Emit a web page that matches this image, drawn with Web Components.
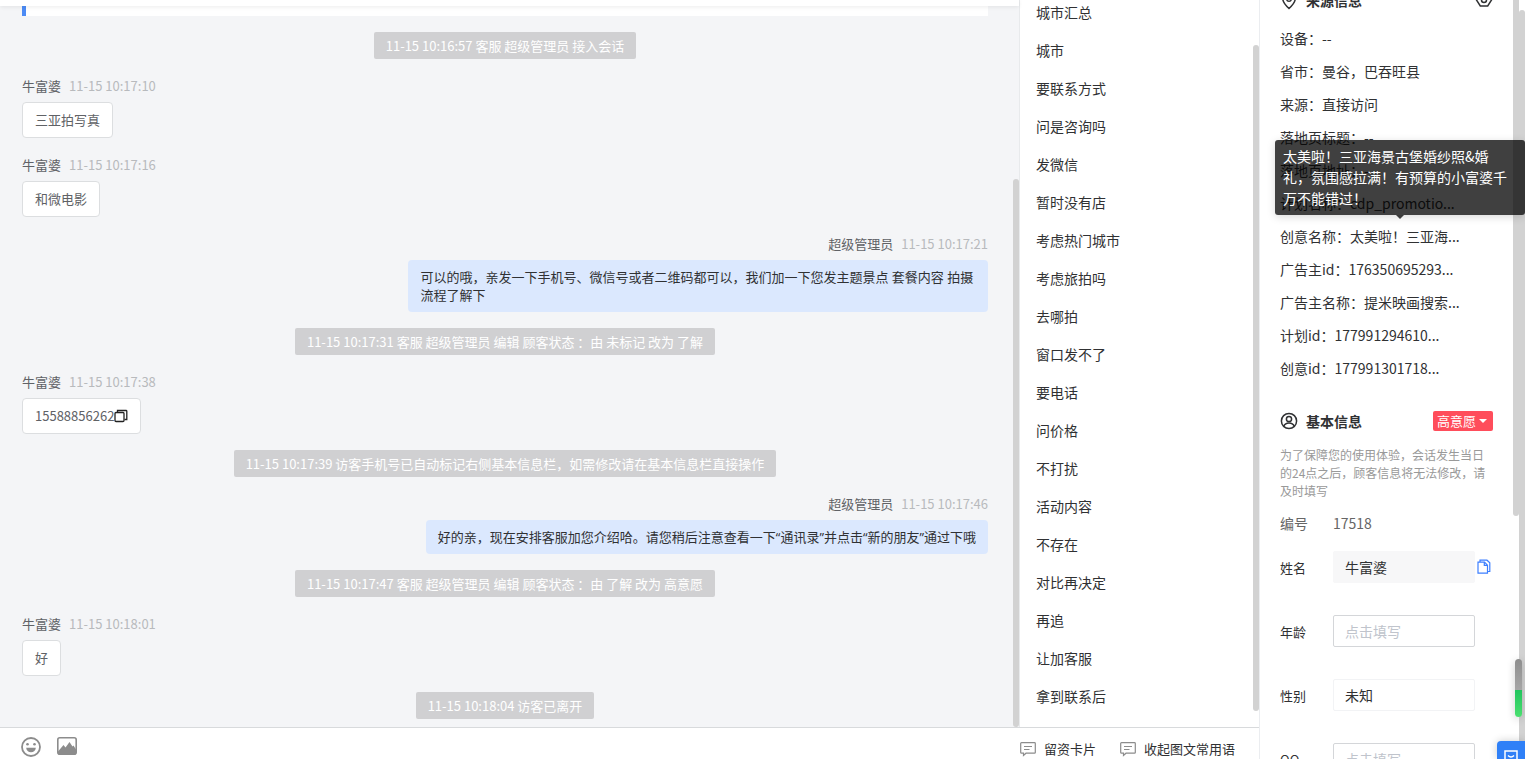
<!DOCTYPE html>
<html lang="zh-CN">
<head>
<meta charset="utf-8">
<title>客服工作台</title>
<style>
  html, body {
    height: 100%;
    margin: 0;
    overflow: hidden;
  }

  body {
    font-family: "Noto Sans CJK SC", "Liberation Sans", sans-serif;
    font-size: 14px;
    color: #303133;
    background: #ffffff;
  }
</style>
</head>
<body>
<chat-app>
  <chat-window slot="chat">
    <chat-notice>11-15 10:16:57 客服 超级管理员 接入会话</chat-notice>
    <chat-message name="牛富婆" time="11-15 10:17:10">三亚拍写真</chat-message>
    <chat-message name="牛富婆" time="11-15 10:17:16">和微电影</chat-message>
    <chat-message out name="超级管理员" time="11-15 10:17:21">可以的哦，亲发一下手机号、微信号或者二维码都可以，我们加一下您发主题景点 套餐内容 拍摄流程了解下</chat-message>
    <chat-notice>11-15 10:17:31 客服 超级管理员 编辑 顾客状态 ：由 未标记 改为 了解</chat-notice>
    <chat-message copy name="牛富婆" time="11-15 10:17:38">15588856262</chat-message>
    <chat-notice>11-15 10:17:39 访客手机号已自动标记右侧基本信息栏，如需修改请在基本信息栏直接操作</chat-notice>
    <chat-message out name="超级管理员" time="11-15 10:17:46">好的亲，现在安排客服加您介绍哈。请您稍后注意查看一下“通讯录”并点击“新的朋友”通过下哦</chat-message>
    <chat-notice>11-15 10:17:47 客服 超级管理员 编辑 顾客状态 ：由 了解 改为 高意愿</chat-notice>
    <chat-message name="牛富婆" time="11-15 10:18:01">好</chat-message>
    <chat-notice>11-15 10:18:04 访客已离开</chat-notice>
  </chat-window>
  <phrase-list slot="phrases" items="城市汇总,城市,要联系方式,问是咨询吗,发微信,暂时没有店,考虑热门城市,考虑旅拍吗,去哪拍,窗口发不了,要电话,问价格,不打扰,活动内容,不存在,对比再决定,再追,让加客服,拿到联系后"></phrase-list>
  <chat-toolbar slot="toolbar"></chat-toolbar>
  <visitor-panel slot="panel">
    <info-row label="设备">--</info-row>
    <info-row label="省市">曼谷，巴吞旺县</info-row>
    <info-row label="来源">直接访问</info-row>
    <info-row label="落地页标题">--</info-row>
    <info-row label="落地页地址">--</info-row>
    <info-row label="计划名称">cdp_promotio...</info-row>
    <info-row label="创意名称" tip="太美啦！三亚海景古堡婚纱照&amp;婚礼，氛围感拉满！有预算的小富婆千万不能错过！">太美啦！三亚海...</info-row>
    <info-row label="广告主id">176350695293...</info-row>
    <info-row label="广告主名称">提米映画搜索...</info-row>
    <info-row label="计划id">177991294610...</info-row>
    <info-row label="创意id">177991301718...</info-row>
  </visitor-panel>
</chat-app>
<help-dock></help-dock>

<script>
function define(name, html, setup) {
  const template = document.createElement('template');
  template.innerHTML = html;

  window.customElements.define(name, class extends HTMLElement {
    constructor() {
      super();
      this.attachShadow({ mode: 'open' });
      this.shadowRoot.appendChild(template.content.cloneNode(true));
    }

    connectedCallback() {
      if (setup) setup(this, this.shadowRoot);
    }
  });
}

// before / size / after are the shares of the track
define('scroll-bar', `
  <style>
    :host {
      display: flex;
      flex: none;
      flex-direction: column;
      width: 6px;
    }
    .thumb {
      border-radius: 3px;
      background: #d2d2d2;
    }
    :host([before="0"]) .thumb {
      border-radius: 0 0 3px 3px;
    }
  </style>
  <div class="before"></div>
  <div class="thumb"></div>
  <div class="after"></div>
`, (el, root) => {
  root.querySelector('.before').style.flex = el.getAttribute('before') + ' 0 0';
  root.querySelector('.thumb').style.flex = el.getAttribute('size') + ' 0 0';
  root.querySelector('.after').style.flex = el.getAttribute('after') + ' 0 0';
});

define('chat-app', `
  <style>
    :host {
      display: flex;
      height: 100vh;
      overflow: hidden;
    }
    .main {
      flex: 1;
      min-width: 0;
      display: flex;
      flex-direction: column;
    }
    .columns {
      flex: 1;
      min-height: 0;
      display: flex;
    }
  </style>
  <div class="main">
    <div class="columns">
      <slot name="chat"></slot>
      <slot name="phrases"></slot>
    </div>
    <slot name="toolbar"></slot>
  </div>
  <slot name="panel"></slot>
`);

define('chat-window', `
  <style>
    :host {
      flex: 1;
      min-width: 0;
      display: flex;
      flex-direction: column;
      background: #f4f5f7;
    }
    .top {
      flex: none;
      height: 6px;
      background: #ffffff;
      box-shadow: 0 1px 4px rgba(0, 0, 0, 0.08);
      z-index: 1;
    }
    .body {
      flex: 1;
      min-height: 0;
      display: flex;
      margin-top: -6px;
    }
    .log {
      flex: 1;
      min-width: 0;
      display: flex;
      flex-direction: column;
      justify-content: flex-end;
      gap: 16px;
      padding: 0 25px 8px 22px;
      overflow: hidden;
    }
    .card {
      flex: 1;
      box-sizing: border-box;
      border-left: 4px solid #4c8bf5;
      background: #ffffff;
    }
  </style>
  <div class="top"></div>
  <div class="body">
    <div class="log">
      <div class="card"></div>
      <slot></slot>
    </div>
    <scroll-bar before="179" size="548" after="0"></scroll-bar>
  </div>
`);

define('chat-notice', `
  <style>
    :host {
      align-self: center;
      box-sizing: border-box;
      height: 27px;
      padding: 1px 12px 0;
      border-radius: 2px;
      background: #d0d0d2;
      color: #ffffff;
      font-size: 13px;
      line-height: 26px;
      white-space: nowrap;
    }
  </style>
  <slot></slot>
`);

define('chat-message', `
  <style>
    :host {
      display: flex;
      flex-direction: column;
      align-items: flex-start;
      gap: 5px;
      font-size: 13px;
    }
    :host([out]) {
      align-items: flex-end;
    }
    .meta {
      display: flex;
      gap: 8px;
      line-height: 22px;
    }
    .name {
      color: #606266;
    }
    .time {
      color: #b8babd;
    }
    .bubble {
      display: flex;
      align-items: center;
      box-sizing: border-box;
      max-width: 60%;
      padding: 8px 12px;
      border: 1px solid #dcdee0;
      border-radius: 4px;
      background: #ffffff;
      color: #606266;
      line-height: 18px;
    }
    :host([out]) .bubble {
      display: block;
      border: 0;
      background: #dbe8fe;
      color: #303133;
      font-family: "Open Sans", "Noto Sans CJK SC", sans-serif;
    }
    button {
      display: none;
      padding: 0;
      border: 0;
      background: none;
      color: #222222;
    }
    :host([copy]) button {
      display: block;
    }
    svg {
      display: block;
    }
  </style>
  <div class="meta"><span class="name"></span><span class="time"></span></div>
  <div class="bubble">
    <slot></slot>
    <button aria-label="复制">
      <svg width="14" height="14" viewBox="0 0 14 14" fill="none" stroke="currentColor" stroke-width="1.3">
        <rect x="1" y="3.5" width="9" height="9" rx="1"/>
        <path d="M3.5 3V1.5h8.5a.8.8 0 0 1 .8.8V10.500H10.500"/>
      </svg>
    </button>
  </div>
`, (el, root) => {
  root.querySelector('.name').textContent = el.getAttribute('name');
  root.querySelector('.time').textContent = el.getAttribute('time');
});

define('phrase-list', `
  <style>
    :host {
      flex: none;
      box-sizing: border-box;
      display: flex;
      width: 240px;
      border-left: 1px solid #e8eaec;
      background: #ffffff;
    }
    ul {
      flex: 1;
      display: flex;
      flex-direction: column;
      justify-content: flex-end;
      margin: 0;
      padding: 0 16px 12px;
      overflow: hidden;
      list-style: none;
    }
    li {
      flex: none;
      line-height: 38px;
    }
  </style>
  <ul></ul>
  <scroll-bar before="45" size="666" after="16"></scroll-bar>
`, (el, root) => {
  const list = root.querySelector('ul');
  el.getAttribute('items').split(',').forEach((text) => {
    const li = document.createElement('li');
    li.textContent = text;
    list.appendChild(li);
  });
});

define('chat-toolbar', `
  <style>
    :host {
      flex: none;
      display: flex;
      justify-content: space-between;
      box-sizing: border-box;
      height: 32px;
      padding: 0 24px 0 21px;
      border-top: 1px solid #d8dadc;
      background: #ffffff;
    }
    .group {
      display: flex;
      gap: 16px;
      padding-top: 9px;
    }
    .group.text {
      gap: 24px;
      padding-top: 11px;
    }
    button {
      display: flex;
      align-items: center;
      gap: 8px;
      height: 20px;
      padding: 0;
      border: 0;
      background: none;
      color: #303133;
      font: inherit;
      font-size: 13px;
      line-height: 20px;
      white-space: nowrap;
    }
    svg {
      flex: none;
      color: #8c8c8c;
    }
  </style>
  <div class="group">
    <button aria-label="表情">
      <svg width="20" height="20" viewBox="0 0 20 20">
        <circle cx="10" cy="10" r="9" fill="none" stroke="currentColor" stroke-width="1.800"/>
        <circle cx="6.500" cy="7.300" r="1.300" fill="currentColor"/>
        <circle cx="13.500" cy="7.300" r="1.300" fill="currentColor"/>
        <path d="M5.200 10.800h9.600a4.800 4.400 0 0 1-9.600 0z" fill="currentColor"/>
      </svg>
    </button>
    <button aria-label="图片">
      <svg width="20" height="20" viewBox="0 0 20 20">
        <rect x=".8" y=".8" width="18.400" height="16.400" rx="2" fill="none" stroke="currentColor" stroke-width="1.600"/>
        <path d="M1 14.500 6.500 8l2 2.500L12.500 5l3 4.500 1-1L19 12.500V17H1z" fill="currentColor"/>
      </svg>
    </button>
  </div>
  <div class="group text">
    <button>
      <svg width="16" height="16" viewBox="0 0 16 16" fill="none" stroke="currentColor" stroke-width="1.200">
        <path d="M1.500 1.600h13a.8.8 0 0 1 .8.8v9a.8.8 0 0 1-.8.8H6L3.500 14.400V12.200h-2a.8.8 0 0 1-.8-.8v-9a.8.8 0 0 1 .8-.8zM4 5.500h8M4 8.500h5.500"/>
      </svg>
      留资卡片
    </button>
    <button>
      <svg width="16" height="16" viewBox="0 0 16 16" fill="none" stroke="currentColor" stroke-width="1.200">
        <path d="M1.500 1.600h13a.8.8 0 0 1 .8.8v9a.8.8 0 0 1-.8.8H6L3.500 14.400V12.200h-2a.8.8 0 0 1-.8-.8v-9a.8.8 0 0 1 .8-.8zM4 5.500h8M4 8.500h5.500"/>
      </svg>
      收起图文常用语
    </button>
  </div>
`);

define('info-row', `
  <style>
    :host {
      display: block;
      position: relative;
      line-height: 33px;
      white-space: nowrap;
    }
    .tip {
      display: none;
      position: absolute;
      z-index: 2;
      left: -5px;
      bottom: calc(100% + 5px);
      box-sizing: border-box;
      width: 250px;
      padding: 6px 16px 6px 8px;
      border-radius: 3px;
      background: rgba(0, 0, 0, 0.75);
      box-shadow: 0 2px 8px rgba(0, 0, 0, 0.15);
      color: #ffffff;
      line-height: 21px;
      white-space: normal;
    }
    .tip::after {
      content: "";
      position: absolute;
      top: 100%;
      left: 50%;
      margin-left: -4px;
      border: 4px solid transparent;
      border-bottom: 0;
      border-top-color: rgba(0, 0, 0, 0.75);
    }
    :host([tip]) .tip {
      display: block;
    }
  </style>
  <span class="label"></span><slot></slot>
  <div class="tip" role="tooltip"></div>
`, (el, root) => {
  root.querySelector('.label').textContent = el.getAttribute('label') + '：';
  root.querySelector('.tip').textContent = el.getAttribute('tip') || '';
});

define('form-row', `
  <style>
    :host {
      display: flex;
      align-items: center;
      height: 32px;
      margin-bottom: 32px;
    }
    label {
      flex: none;
      width: 53px;
      font-size: 13px;
    }
    input, select {
      flex: none;
      appearance: none;
      box-sizing: border-box;
      width: 142px;
      height: 32px;
      margin: 0;
      padding: 0 11px;
      border: 1px solid #d4d6d9;
      border-radius: 2px;
      background: #ffffff;
      color: #303133;
      font: inherit;
      outline: 0;
    }
    select {
      border-color: #f2f3f5;
    }
    input[readonly] {
      border-color: #f7f7f8;
      background: #f7f7f8;
    }
    input::placeholder {
      color: #c0c4cc;
      opacity: 1;
    }
    button {
      margin-left: 2px;
      padding: 0;
      border: 0;
      background: none;
    }
    svg {
      display: block;
    }
  </style>
  <label for="field"></label>
`, (el, root) => {
  root.querySelector('label').textContent = el.getAttribute('label');
  const value = el.getAttribute('value');
  const field = document.createElement(el.hasAttribute('select') ? 'select' : 'input');
  field.id = 'field';
  if (el.hasAttribute('select')) {
    field.add(new Option(value, value));
  } else if (value) {
    field.value = value;
    field.readOnly = true;
  } else {
    field.placeholder = '点击填写';
  }
  root.appendChild(field);
  if (el.hasAttribute('copy')) {
    const button = document.createElement('button');
    button.setAttribute('aria-label', '复制');
    button.innerHTML = `
      <svg width="14" height="16" viewBox="0 0 14 16" fill="none" stroke="#3d7fff" stroke-width="1.200">
        <path d="M1 3.200h6.500l3 3V14.200H1zM7.300 3.200v3.200h3.200M3 2.800V1.200h7l2.800 2.500v8.800h-2"/>
      </svg>`;
    root.appendChild(button);
  }
});

define('visitor-panel', `
  <style>
    :host {
      flex: none;
      box-sizing: border-box;
      display: flex;
      width: 266px;
      border-left: 1px solid #ebedf0;
      background: #ffffff;
    }
    .content {
      flex: 1;
      min-width: 0;
      margin-top: -11px;
      padding: 0 20px;
    }
    header {
      display: flex;
      align-items: center;
      gap: 8px;
      height: 22px;
    }
    h2 {
      flex: 1;
      margin: 0;
      font-size: 14px;
      line-height: 22px;
      font-weight: bold;
    }
    svg {
      flex: none;
      display: block;
    }
    .source {
      padding: 11px 0 25px;
    }
    .tag {
      display: flex;
      align-items: center;
      gap: 3px;
      height: 20px;
      padding: 0 6px 0 4px;
      border: 0;
      border-radius: 2px;
      background: #ff4d5b;
      color: #ffffff;
      font: inherit;
      font-size: 13px;
      line-height: 20px;
    }
    .caret {
      border: 4px solid transparent;
      border-top-color: #ffffff;
      border-bottom: 0;
    }
    p {
      margin: 0;
      padding: 14px 0 12px;
      color: #999999;
      font-size: 12px;
      line-height: 18px;
    }
    .number {
      display: flex;
      gap: 25px;
      padding-bottom: 17px;
      color: #666666;
      line-height: 22px;
    }
    .icon-button {
      padding: 0;
      border: 0;
      background: none;
    }
  </style>
  <div class="content">
    <header>
      <svg width="18" height="20" viewBox="0 0 18 20" fill="none" stroke="#303133" stroke-width="1.500">
        <path d="M9 18.500C5 14.800 2.700 11.800 2.700 8.500a6.300 6.300 0 0 1 12.600 0c0 3.300-2.300 6.300-6.300 10z"/>
        <circle cx="9" cy="9" r="2.300"/>
      </svg>
      <h2>来源信息</h2>
      <button class="icon-button" aria-label="设置">
        <svg width="18" height="18" viewBox="0 0 18 18" fill="none" stroke="#303133" stroke-width="1.500">
          <path d="M5.300 2.500h7.400L16.500 9l-3.800 6H5.300L1.500 9z"/>
          <circle cx="9" cy="9" r="2.500"/>
        </svg>
      </button>
    </header>
    <div class="source"><slot></slot></div>
    <header>
      <svg width="18" height="18" viewBox="0 0 18 18" fill="none" stroke="#303133" stroke-width="1.500">
        <circle cx="9" cy="9" r="7.600"/>
        <circle cx="9" cy="7" r="2.600"/>
        <path d="M3.800 14.300c.9-2.200 2.800-3.300 5.200-3.300s4.300 1.100 5.200 3.300"/>
      </svg>
      <h2>基本信息</h2>
      <button class="tag">高意愿<span class="caret"></span></button>
    </header>
    <p>为了保障您的使用体验，会话发生当日的24点之后，顾客信息将无法修改，请及时填写</p>
    <div class="number"><span>编号</span><span>17518</span></div>
    <form-row label="姓名" value="牛富婆" copy></form-row>
    <form-row label="年龄"></form-row>
    <form-row label="性别" value="未知" select></form-row>
    <form-row label="QQ"></form-row>
  </div>
  <scroll-bar before="0" size="516" after="243"></scroll-bar>
  <scroll-bar before="10" size="749" after="0"></scroll-bar>
`);

// floating widgets over the right edge of the window
define('help-dock', `
  <style>
    :host {
      display: block;
      position: fixed;
      z-index: 3;
      right: 0;
      bottom: 0;
    }
    .meter {
      width: 7px;
      height: 58px;
      margin: 0 3px 24px auto;
      border-radius: 4px;
      background: linear-gradient(#8e8e8e, #a6a6a6 54%, #22c55e 54%, #4be070);
      box-shadow: 0 2px 8px rgba(0, 0, 0, 0.2);
    }
    button {
      display: block;
      width: 28px;
      height: 18px;
      padding: 9px 0 0 7px;
      border: 0;
      border-radius: 4px 0 0 0;
      background: #2f80f7;
      box-shadow: 0 0 8px rgba(0, 0, 0, 0.2);
      overflow: hidden;
    }
    svg {
      display: block;
    }
  </style>
  <div class="meter"></div>
  <button aria-label="在线咨询">
    <svg width="14" height="14" viewBox="0 0 14 14" fill="none" stroke="#ffffff" stroke-width="1.500">
      <path d="M1 1h12v11H1zM4 5.500q3 3 6 0"/>
    </svg>
  </button>
`);
</script>
</body>
</html>
